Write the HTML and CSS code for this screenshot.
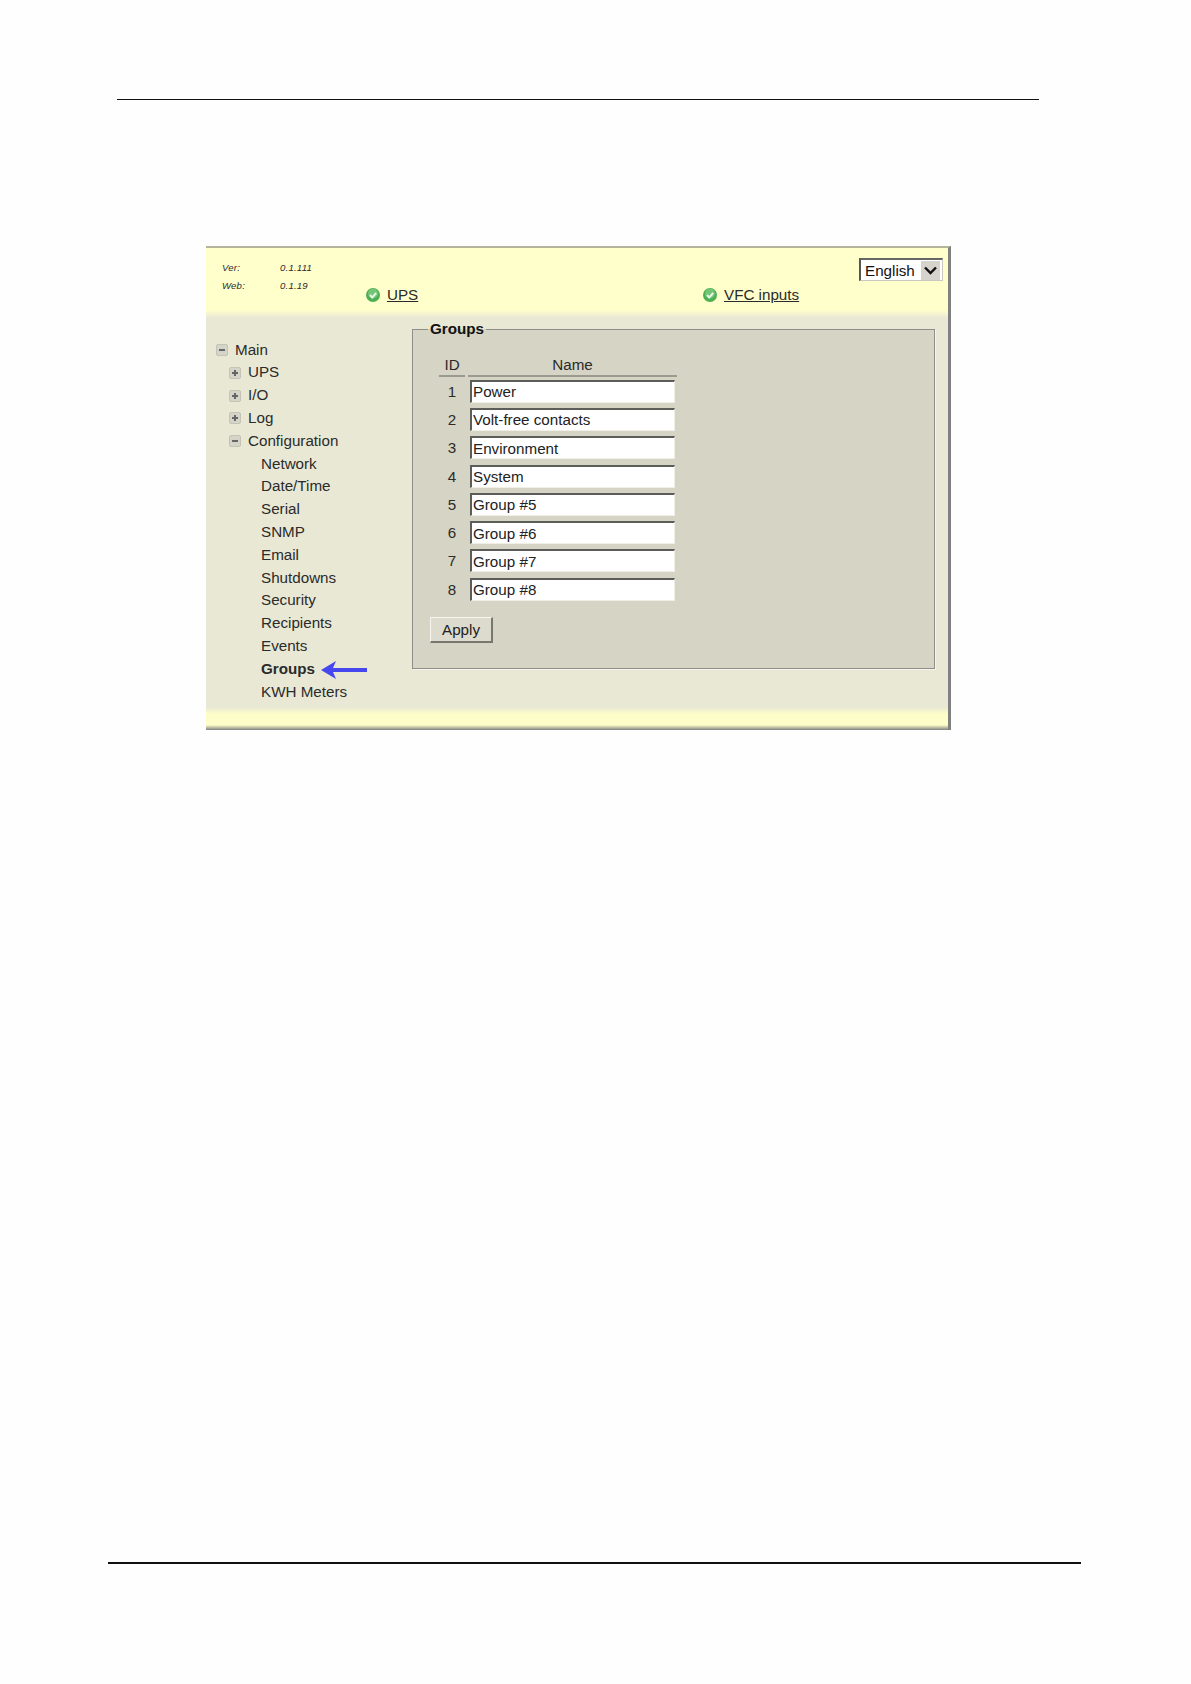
FILE: index.html
```html
<!DOCTYPE html>
<html lang="en">
<head>
    <meta charset="UTF-8">
    <meta name="viewport" content="width=device-width, initial-scale=1.0">
    <title>Groups</title>
    <link rel="stylesheet" href="styles.css">
</head>
<body>
    <hr class="top-rule">

    <div class="panel">
        <div class="header">
            <div class="version">
                <span>Ver:</span><span>0.1.111</span>
                <span>Web:</span><span>0.1.19</span>
            </div>
            <div class="status">
                <svg class="status-icon" viewBox="0 0 14 14"><circle cx="7" cy="7" r="7" fill="#4caf50"/><circle cx="7" cy="5.5" r="5" fill="#74c476"/><path d="M4 7l2.2 2.4L10.2 5" fill="none" stroke="#e8f5e8" stroke-width="2"/></svg>
                <a href="#">UPS</a>
            </div>
            <div class="status">
                <svg class="status-icon" viewBox="0 0 14 14"><circle cx="7" cy="7" r="7" fill="#4caf50"/><circle cx="7" cy="5.5" r="5" fill="#74c476"/><path d="M4 7l2.2 2.4L10.2 5" fill="none" stroke="#e8f5e8" stroke-width="2"/></svg>
                <a href="#">VFC inputs</a>
            </div>
            <div class="lang">
                <span class="lang-value">English</span>
                <span class="lang-arrow"><svg viewBox="0 0 19 19" width="19" height="19"><path d="M4 6.5l5.5 5.5L15 6.5" fill="none" stroke="#111" stroke-width="2.4"/></svg></span>
            </div>
        </div>

        <div class="main">
            <ul class="tree">
                <li class="branch"><span class="toggle minus"></span>Main</li>
                <li class="branch sub"><span class="toggle plus"></span>UPS</li>
                <li class="branch sub"><span class="toggle plus"></span>I/O</li>
                <li class="branch sub"><span class="toggle plus"></span>Log</li>
                <li class="branch sub"><span class="toggle minus"></span>Configuration</li>
                <li class="leaf">Network</li>
                <li class="leaf">Date/Time</li>
                <li class="leaf">Serial</li>
                <li class="leaf">SNMP</li>
                <li class="leaf">Email</li>
                <li class="leaf">Shutdowns</li>
                <li class="leaf">Security</li>
                <li class="leaf">Recipients</li>
                <li class="leaf">Events</li>
                <li class="leaf current">Groups
                    <svg class="arrow" viewBox="0 0 46 20" width="46" height="20"><path d="M0 10L15 1l-3 7h34v4H12l3 7z" fill="#4747f0"/></svg>
                </li>
                <li class="leaf">KWH Meters</li>
            </ul>

            <fieldset class="group-box">
                <legend>Groups</legend>
                <table class="group-table">
                    <thead>
                        <tr><th class="col-id">ID</th><th class="col-name">Name</th></tr>
                    </thead>
                    <tbody>
                        <tr><td>1</td><td><input type="text" value="Power"></td></tr>
                        <tr><td>2</td><td><input type="text" value="Volt-free contacts"></td></tr>
                        <tr><td>3</td><td><input type="text" value="Environment"></td></tr>
                        <tr><td>4</td><td><input type="text" value="System"></td></tr>
                        <tr><td>5</td><td><input type="text" value="Group #5"></td></tr>
                        <tr><td>6</td><td><input type="text" value="Group #6"></td></tr>
                        <tr><td>7</td><td><input type="text" value="Group #7"></td></tr>
                        <tr><td>8</td><td><input type="text" value="Group #8"></td></tr>
                    </tbody>
                </table>
                <button type="button" class="apply">Apply</button>
            </fieldset>
        </div>
    </div>

    <hr class="bottom-rule">
</body>
</html>
```

FILE: styles.css
```css
* {
    margin: 0;
    padding: 0;
    box-sizing: border-box;
    font-family: "Liberation Sans", Arial, sans-serif;
}

body {
    background: #fefefe;
    color: #2b2b2b;
    font-size: 15.2px;
    height: 1684px;
    overflow: hidden;
}

hr {
    border: none;
}

.top-rule {
    margin: 99px 0 0 117px;
    width: 922px;
    border-top: 1px solid #111;
}

.bottom-rule {
    margin: 832px 0 0 108px;
    width: 973px;
    border-top: 2px solid #111;
}

.panel {
    margin: 146px 0 0 206px;
    width: 745px;
    height: 484px;
    border-top: 2px solid #b4b39c;
    border-right: 3px solid #808080;
    background: linear-gradient(to bottom,
        #ffffcc 0, #ffffcc 62px, #e9e8d5 70px,
        #e9e8d5 459px, #fdfdc9 466px,
        #fdfdc9 477px, #808080 482px);
}

.header {
    height: 70px;
    padding-left: 16px;
    display: grid;
    grid-template-columns: 144px 337px 156px 84px;
}

.version {
    display: grid;
    grid-template-columns: 58px auto;
    grid-auto-rows: 18px;
    padding-top: 11px;
    font-size: 9.6px;
    font-style: italic;
    line-height: 18px;
    letter-spacing: 0.2px;
}

.status {
    display: flex;
    align-items: center;
    gap: 7px;
    height: 22px;
    margin-top: 35px;
}

.status-icon {
    width: 14px;
    height: 14px;
    margin-top: 2px;
}

.status a {
    color: #2b2b2b;
}

.lang {
    display: flex;
    justify-content: space-between;
    align-items: center;
    height: 23px;
    margin-top: 10px;
    padding: 0 2px 0 4px;
    background: #fff;
    border-top: 2px solid #666;
    border-left: 2px solid #555;
    border-right: 1px solid #c8c8c0;
    border-bottom: 1px solid #c8c8c0;
    color: #111;
}

.lang-arrow {
    display: block;
    width: 19px;
    height: 19px;
    background: #d6d2cc;
}

.lang-arrow svg {
    display: block;
}

.main {
    display: flex;
    align-items: flex-start;
}

.tree {
    list-style: none;
    width: 206px;
    padding-top: 20.6px;
    line-height: 22.8px;
}

.tree li {
    display: flex;
    align-items: center;
    height: 22.8px;
}

.branch {
    padding-left: 10px;
}

.branch.sub {
    padding-left: 23px;
}

.leaf {
    padding-left: 55px;
}

.current {
    font-weight: bold;
}

.toggle {
    position: relative;
    width: 12px;
    height: 12px;
    margin-right: 7px;
    background: #d5d4c8;
    border: 1px solid #c4c3b6;
    border-radius: 2px;
}

.branch.sub .toggle {
    margin-right: 7px;
}

.toggle::before {
    content: "";
    position: absolute;
    left: 2px;
    top: 4px;
    width: 6px;
    height: 2px;
    background: #666;
}

.toggle.plus::after {
    content: "";
    position: absolute;
    left: 4px;
    top: 2px;
    width: 2px;
    height: 6px;
    background: #666;
}

.arrow {
    margin: 2px 0 0 6px;
}

.group-box {
    width: 523px;
    height: 351px;
    margin-left: 0;
    background: #d6d4c4;
    border: 1px solid #8f8f8a;
    box-shadow: 1px 1px 0 #f5f5ec;
}

.group-box legend {
    margin-left: 15px;
    padding: 0 2px;
    font-weight: bold;
    line-height: 22px;
    color: #111;
}

.group-table {
    margin: 14px 0 0 23px;
    border-collapse: separate;
    border-spacing: 3px 0;
}

.group-table th {
    height: 23px;
    font-weight: normal;
    border-bottom: 2px solid #9a9a90;
}

.col-id {
    width: 26px;
}

.col-name {
    width: 209px;
}

.group-table td {
    height: 28.3px;
    padding: 0 2px;
    text-align: center;
}

.group-table input {
    display: block;
    width: 205px;
    height: 23px;
    padding-left: 1px;
    font-size: 15.2px;
    color: #222;
    background: #fff;
    border-top: 2px solid #5c5c58;
    border-left: 2px solid #5c5c58;
    border-right: 1px solid #efefe6;
    border-bottom: 1px solid #efefe6;
    outline: none;
}

.apply {
    display: block;
    width: 63px;
    height: 26px;
    margin: 14px 0 0 17px;
    font-size: 15.2px;
    color: #222;
    background: #dddbcd;
    border-top: 1px solid #f6f6ee;
    border-left: 1px solid #f6f6ee;
    border-right: 2px solid #77776f;
    border-bottom: 2px solid #77776f;
}
```
